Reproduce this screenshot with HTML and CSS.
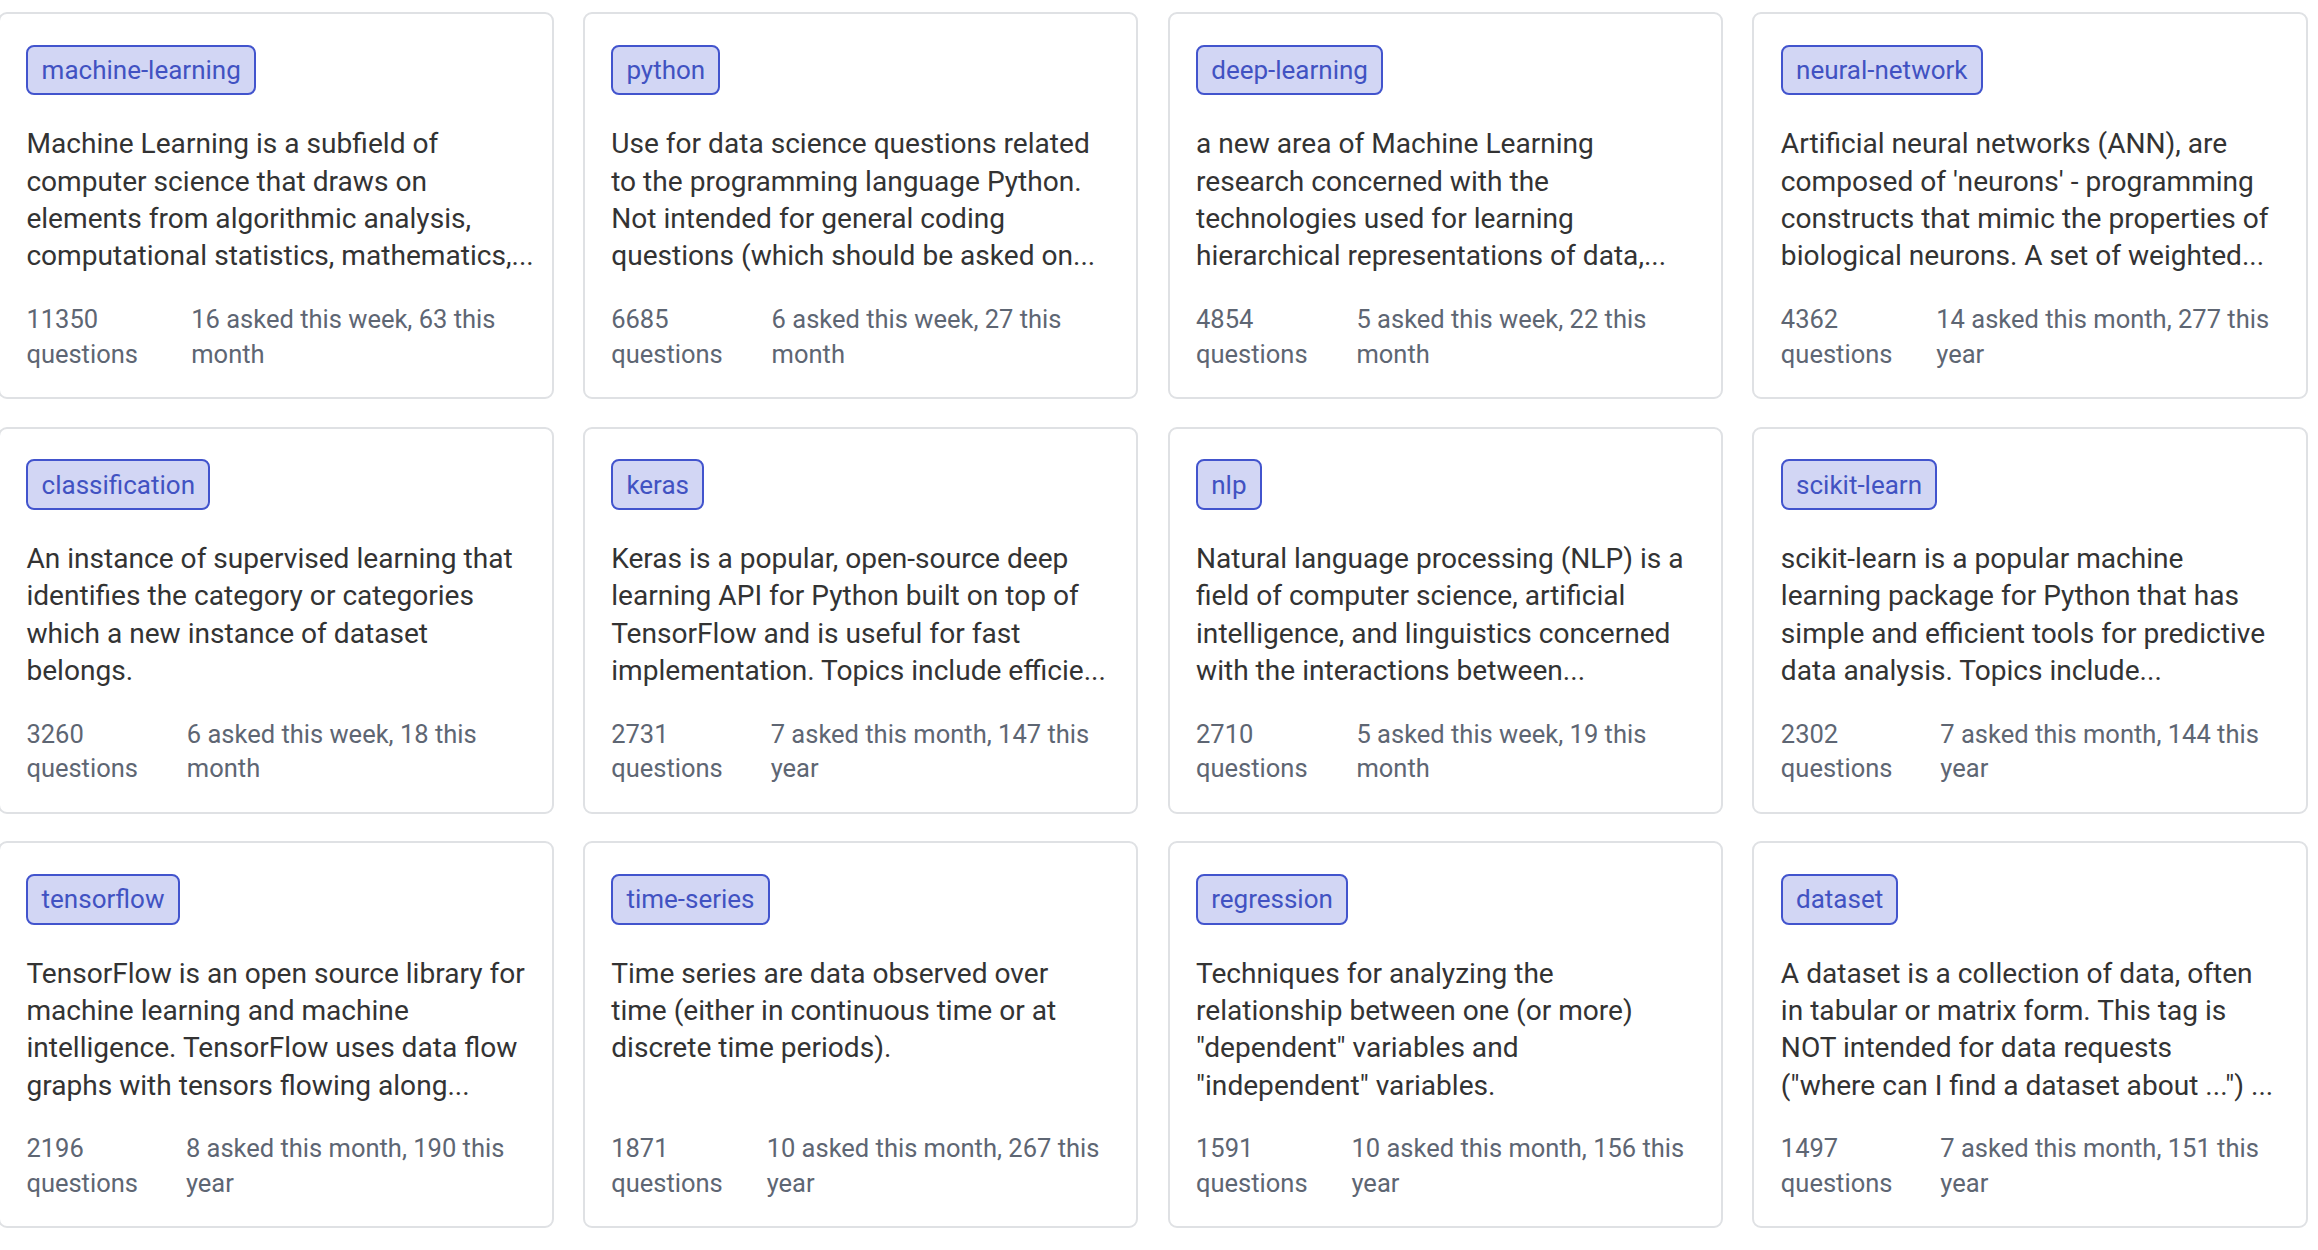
FILE: index.html
```
<!DOCTYPE html>
<html lang="en">
<head>
<meta charset="utf-8">
<title>Tags</title>
<link rel="stylesheet" href="styles.css">
</head>
<body>
<main class="tags-grid">
  <article class="card">
    <a class="tag">machine-learning</a>
    <p class="desc">Machine Learning is a subfield of<br>computer science that draws on<br>elements from algorithmic analysis,<br>computational statistics, mathematics,...</p>
    <div class="stats"><div class="count">11350 questions</div><div class="recent">16 asked this week, 63 this month</div></div>
  </article>
  <article class="card">
    <a class="tag">python</a>
    <p class="desc">Use for data science questions related<br>to the programming language Python.<br>Not intended for general coding<br>questions (which should be asked on...</p>
    <div class="stats"><div class="count">6685 questions</div><div class="recent">6 asked this week, 27 this month</div></div>
  </article>
  <article class="card">
    <a class="tag">deep-learning</a>
    <p class="desc">a new area of Machine Learning<br>research concerned with the<br>technologies used for learning<br>hierarchical representations of data,...</p>
    <div class="stats"><div class="count">4854 questions</div><div class="recent">5 asked this week, 22 this month</div></div>
  </article>
  <article class="card">
    <a class="tag">neural-network</a>
    <p class="desc">Artificial neural networks (ANN), are<br>composed of 'neurons' - programming<br>constructs that mimic the properties of<br>biological neurons. A set of weighted...</p>
    <div class="stats"><div class="count">4362 questions</div><div class="recent">14 asked this month, 277 this year</div></div>
  </article>
  <article class="card">
    <a class="tag">classification</a>
    <p class="desc">An instance of supervised learning that<br>identifies the category or categories<br>which a new instance of dataset<br>belongs.</p>
    <div class="stats"><div class="count">3260 questions</div><div class="recent">6 asked this week, 18 this month</div></div>
  </article>
  <article class="card">
    <a class="tag">keras</a>
    <p class="desc">Keras is a popular, open-source deep<br>learning API for Python built on top of<br>TensorFlow and is useful for fast<br>implementation. Topics include efficie...</p>
    <div class="stats"><div class="count">2731 questions</div><div class="recent">7 asked this month, 147 this year</div></div>
  </article>
  <article class="card">
    <a class="tag">nlp</a>
    <p class="desc">Natural language processing (NLP) is a<br>field of computer science, artificial<br>intelligence, and linguistics concerned<br>with the interactions between...</p>
    <div class="stats"><div class="count">2710 questions</div><div class="recent">5 asked this week, 19 this month</div></div>
  </article>
  <article class="card">
    <a class="tag">scikit-learn</a>
    <p class="desc">scikit-learn is a popular machine<br>learning package for Python that has<br>simple and efficient tools for predictive<br>data analysis. Topics include...</p>
    <div class="stats"><div class="count">2302 questions</div><div class="recent">7 asked this month, 144 this year</div></div>
  </article>
  <article class="card">
    <a class="tag">tensorflow</a>
    <p class="desc">TensorFlow is an open source library for<br>machine learning and machine<br>intelligence. TensorFlow uses data flow<br>graphs with tensors flowing along...</p>
    <div class="stats"><div class="count">2196 questions</div><div class="recent">8 asked this month, 190 this year</div></div>
  </article>
  <article class="card">
    <a class="tag">time-series</a>
    <p class="desc">Time series are data observed over<br>time (either in continuous time or at<br>discrete time periods).</p>
    <div class="stats"><div class="count">1871 questions</div><div class="recent">10 asked this month, 267 this year</div></div>
  </article>
  <article class="card">
    <a class="tag">regression</a>
    <p class="desc">Techniques for analyzing the<br>relationship between one (or more)<br>"dependent" variables and<br>"independent" variables.</p>
    <div class="stats"><div class="count">1591 questions</div><div class="recent">10 asked this month, 156 this year</div></div>
  </article>
  <article class="card">
    <a class="tag">dataset</a>
    <p class="desc">A dataset is a collection of data, often<br>in tabular or matrix form. This tag is<br>NOT intended for data requests<br>("where can I find a dataset about ...") ...</p>
    <div class="stats"><div class="count">1497 questions</div><div class="recent">7 asked this month, 151 this year</div></div>
  </article>
</main>
</body>
</html>
```

FILE: styles.css
```
* {
  box-sizing: border-box;
}

html, body {
  margin: 0;
  padding: 0;
  background: #ffffff;
}

body {
  font-family: Roboto, "Liberation Sans", Arial, sans-serif;
  color: #353535;
  overflow: hidden;
}

.tags-grid {
  display: grid;
  grid-template-columns: repeat(4, minmax(0, 1fr));
  column-gap: 29.3px;
  row-gap: 27.7px;
  width: 2310px;
  margin: 12px 0 0 -2px;
}

.card {
  display: flex;
  flex-direction: column;
  min-width: 0;
  border: 2px solid #dfe1e4;
  border-radius: 9px;
  padding: 30.6px 26.4px 25.8px;
  background: #ffffff;
}

.tag {
  align-self: flex-start;
  font-size: 26px;
  line-height: normal;
  padding: 8.4px 13.2px;
  border: 2px solid #4254cd;
  border-radius: 8px;
  background: #d2d6f4;
  color: #4152c2;
  text-decoration: none;
}

.desc {
  flex: 1;
  margin: 30px 0 0;
  min-height: 149.2px;
  font-size: 28.1px;
  line-height: 37.3px;
  white-space: nowrap;
  color: #333333;
}

.stats {
  display: flex;
  margin-top: 27.6px;
  font-size: 25.5px;
  line-height: 34.5px;
  color: #5e6673;
}
```
